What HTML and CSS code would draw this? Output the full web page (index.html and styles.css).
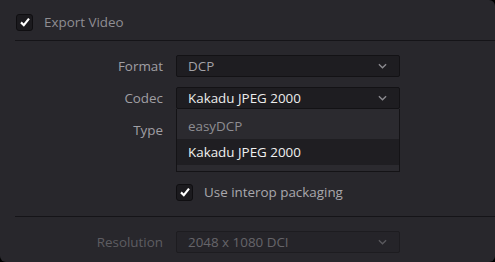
FILE: index.html
```html
<!DOCTYPE html>
<html lang="en">
<head>
  <meta charset="UTF-8" />
  <title>Export Video</title>
  <link rel="stylesheet" href="styles.css">
</head>
<body>
  <div class="panel">
    <div class="section-head">
      <span class="check"><svg viewBox="0 0 12 12"><path d="M2 6.4 L4.8 9.2 L10 2.6" /></svg></span>
      <span class="head-text">Export Video</span>
    </div>

    <div class="form">
      <span class="label">Format</span>
      <div class="select">
        <span class="value">DCP</span>
        <svg class="chev" viewBox="0 0 10 6"><path d="M1 1 L5 5 L9 1" /></svg>
      </div>

      <span class="label">Codec</span>
      <div class="select open">
        <span class="value bright">Kakadu JPEG 2000</span>
        <svg class="chev" viewBox="0 0 10 6"><path d="M1 1 L5 5 L9 1" /></svg>
        <ul class="menu">
          <li>easyDCP</li>
          <li class="active">Kakadu JPEG 2000</li>
        </ul>
      </div>

      <span class="label">Type</span>
      <div class="select"></div>

      <span class="label spacer"></span>
      <div class="check-row">
        <span class="check"><svg viewBox="0 0 12 12"><path d="M2 6.4 L4.8 9.2 L10 2.6" /></svg></span>
        <span class="check-text">Use interop packaging</span>
      </div>
    </div>

    <div class="form last disabled">
      <span class="label">Resolution</span>
      <div class="select">
        <span class="value">2048 x 1080 DCI</span>
        <svg class="chev" viewBox="0 0 10 6"><path d="M1 1 L5 5 L9 1" /></svg>
      </div>
    </div>
  </div>
</body>
</html>
```

FILE: styles.css
```css
html, body {
  margin: 0;
  background: #000;
}
body {
  font-family: 'Open Sans', 'Noto Sans', sans-serif;
  font-size: 13.4px;
  color: #a09fa4;
}
.panel {
  width: 495px;
  height: 262px;
  box-sizing: border-box;
  background: #28272c;
  border-radius: 0 6px 6px 6px;
  padding-left: 15px;
  overflow: hidden;
}
.section-head {
  display: flex;
  align-items: center;
  gap: 11px;
  height: 36px;
  padding-top: 4px;
  padding-left: 1px;
  border-bottom: 1px solid #151418;
  color: #8f8e93;
}
.check {
  display: inline-flex;
  align-items: center;
  justify-content: center;
  width: 15px;
  height: 15px;
  background: #1b1a1e;
  border: 1px solid #0f0e11;
  border-radius: 3px;
}
.check svg {
  width: 12px;
  height: 12px;
  fill: none;
  stroke: #fff;
  stroke-width: 2.2;
}
.form {
  display: grid;
  grid-template-columns: 148px 224px;
  column-gap: 13px;
  row-gap: 10px;
  padding: 14px 0 13px;
  border-bottom: 1px solid #151418;
}
.form.last {
  border-bottom: none;
  padding-top: 14px;
}
.label {
  text-align: right;
  line-height: 22px;
}
.select {
  position: relative;
  display: flex;
  align-items: center;
  justify-content: space-between;
  height: 20px;
  padding: 0 10px 0 11px;
  background: #1e1d21;
  border: 1px solid #131215;
  border-radius: 2px;
}
.value {
  color: #a3a2a7;
}
.value.bright {
  color: #ececec;
}
.chev {
  width: 9px;
  height: 6px;
  fill: none;
  stroke: #8c8b90;
  stroke-width: 1.5;
  margin-right: 2px;
}
.menu {
  position: absolute;
  left: -1px;
  top: 21px;
  width: 224px;
  box-sizing: border-box;
  margin: 0;
  padding: 4px 0 6px;
  list-style: none;
  background: #2b2a2f;
  border: 1px solid #141316;
  border-top: none;
  z-index: 2;
}
.menu li {
  height: 26px;
  line-height: 26px;
  padding-left: 11px;
  color: #8e8d92;
}
.menu li.active {
  background: #1f1e22;
  color: #f0f0f0;
}
.check-row {
  display: flex;
  align-items: center;
  gap: 11px;
  height: 22px;
  margin-top: 30px;
}
.check-text {
  color: #a9a8ad;
}
.disabled .label {
  color: #5e5d62;
}
.disabled .select {
  background: #252429;
  border-color: #1d1c20;
}
.disabled .value {
  color: #66656a;
}
.disabled .chev {
  stroke: #5a595e;
}
```
